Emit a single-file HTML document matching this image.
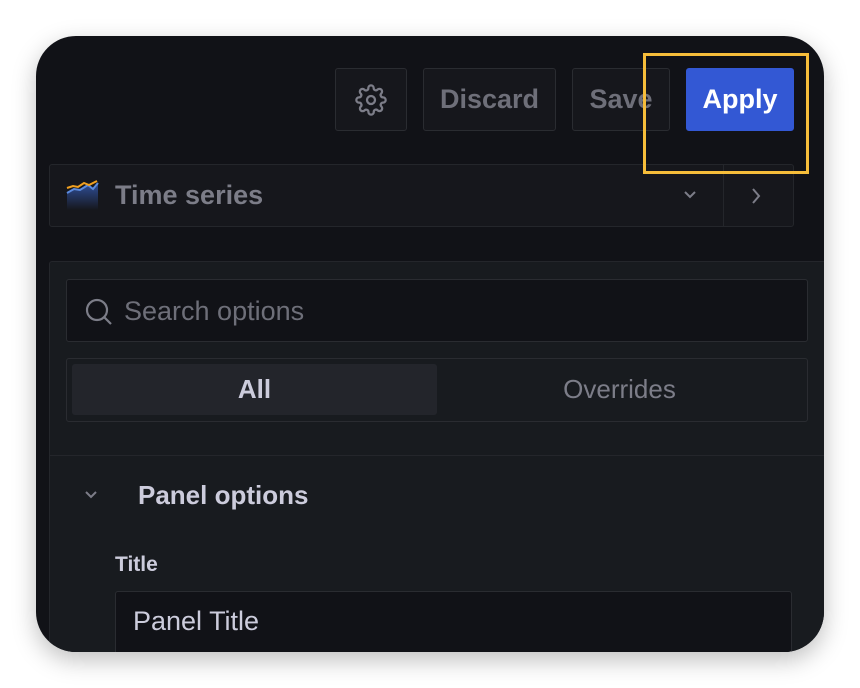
<!DOCTYPE html>
<html><head><style>
*{box-sizing:border-box;margin:0;padding:0}
body{width:860px;height:688px;background:#fff;font-family:"Liberation Sans",sans-serif;position:relative;overflow:hidden}
.card{position:absolute;left:36px;top:36px;width:788px;height:616px;background:#111217;border-radius:40px;overflow:hidden;box-shadow:0 8px 24px rgba(0,0,0,.25)}
.a{position:absolute}
.btn{position:absolute;top:32px;height:63px;background:#16171c;border:1px solid #2a2c31;border-radius:3px;color:#6e6f79;font-weight:bold;font-size:27px;display:flex;align-items:center;justify-content:center}
</style></head><body>
<div class="card">
 <div class="btn" style="left:299px;width:72px"><svg width="32" height="32" viewBox="0 0 24 24" fill="none" stroke="#7c7d88" stroke-width="1.7"><circle cx="12" cy="12" r="3"/><path d="M19.4 15a1.65 1.65 0 0 0 .33 1.82l.06.06a2 2 0 1 1-2.83 2.83l-.06-.06a1.65 1.65 0 0 0-1.82-.33 1.65 1.65 0 0 0-1 1.51V21a2 2 0 1 1-4 0v-.09A1.65 1.65 0 0 0 9 19.4a1.65 1.65 0 0 0-1.82.33l-.06.06a2 2 0 1 1-2.83-2.83l.06-.06A1.65 1.65 0 0 0 4.68 15a1.65 1.65 0 0 0-1.51-1H3a2 2 0 1 1 0-4h.09A1.65 1.65 0 0 0 4.6 9a1.65 1.65 0 0 0-.33-1.82l-.06-.06a2 2 0 1 1 2.83-2.83l.06.06A1.65 1.65 0 0 0 9 4.68 1.65 1.65 0 0 0 10 3.17V3a2 2 0 1 1 4 0v.09a1.65 1.65 0 0 0 1 1.51 1.65 1.65 0 0 0 1.82-.33l.06-.06a2 2 0 1 1 2.83 2.83l-.06.06A1.65 1.65 0 0 0 19.4 9a1.65 1.65 0 0 0 1.51 1H21a2 2 0 1 1 0 4h-.09a1.65 1.65 0 0 0-1.51 1z"/></svg></div>
 <div class="btn" style="left:387px;width:133px">Discard</div>
 <div class="btn" style="left:536px;width:98px">Save</div>
 <div class="btn" style="left:650px;width:108px;background:#3358d4;border-color:#3358d4;color:#fff">Apply</div>
 <div class="a" style="left:13px;top:128px;width:745px;height:63px;background:#16171c;border:1px solid #24262b;border-radius:3px">
  <svg class="a" style="left:16px;top:15px" width="34" height="30" viewBox="0 0 34 30"><defs><linearGradient id="g" x1="0" y1="0" x2="0" y2="1"><stop offset="0" stop-color="#2f4f9a"/><stop offset="1" stop-color="#16171c"/></linearGradient></defs><path d="M1 13 L8 9 L14 10 L22 5 L27 9 L32 3 L32 30 L1 30Z" fill="url(#g)"/><path d="M1 13 L8 9 L14 10 L22 5 L27 9 L32 3" stroke="#5b8bdf" stroke-width="2" fill="none"/><path d="M1 5 L7 3 L12 4 L18 0 L23 2 L31 -2" transform="translate(0,3)" stroke="#f0a020" stroke-width="2" fill="none"/></svg>
  <div class="a" style="left:65px;top:15px;font-size:27px;font-weight:bold;color:#7c7d88">Time series</div>
  <svg class="a" style="left:632px;top:24px" width="16" height="12" viewBox="0 0 16 12"><path d="M3 3 L8 8 L13 3" stroke="#7c7d88" stroke-width="2" fill="none"/></svg>
  <div class="a" style="left:673px;top:0;width:1px;height:61px;background:#24262b"></div>
  <svg class="a" style="left:700px;top:22px" width="12" height="18" viewBox="0 0 12 18"><path d="M3 2 L9 9 L3 16" stroke="#7c7d88" stroke-width="2" fill="none"/></svg>
 </div>
 <div class="a" style="left:13px;top:225px;width:790px;height:400px;background:#181b1f;border:1px solid #24262b;border-radius:3px">
  <div class="a" style="left:16px;top:17px;width:742px;height:63px;background:#111217;border:1px solid #2a2c31;border-radius:3px">
   <svg class="a" style="left:17px;top:17px" width="30" height="30" viewBox="0 0 30 30"><circle cx="13" cy="13" r="10" stroke="#7c7d88" stroke-width="2.2" fill="none"/><path d="M20.5 20.5 L27 27" stroke="#7c7d88" stroke-width="2.2"/></svg>
   <div class="a" style="left:57px;top:16px;font-size:27px;color:#6e6f79">Search options</div>
  </div>
  <div class="a" style="left:16px;top:96px;width:742px;height:64px;background:#181b1f;border:1px solid #2a2c31;border-radius:3px">
   <div class="a" style="left:5px;top:5px;width:365px;height:51px;background:#23252b;border-radius:3px;color:#ccccdc;font-weight:bold;font-size:26px;display:flex;align-items:center;justify-content:center">All</div>
   <div class="a" style="left:370px;top:5px;width:365px;height:51px;color:#7c7d88;font-size:26px;display:flex;align-items:center;justify-content:center">Overrides</div>
  </div>
  <div class="a" style="left:0;top:193px;width:790px;height:1px;background:#24262b"></div>
  <svg class="a" style="left:33px;top:227px" width="16" height="12" viewBox="0 0 16 12"><path d="M3 3 L8 8 L13 3" stroke="#7c7d88" stroke-width="2" fill="none"/></svg>
  <div class="a" style="left:88px;top:218px;font-size:26px;font-weight:bold;color:#ccccdc">Panel options</div>
  <div class="a" style="left:65px;top:291px;font-size:21px;font-weight:bold;color:#ccccdc">Title</div>
  <div class="a" style="left:65px;top:329px;width:677px;height:80px;background:#111217;border:1px solid #2a2c31;border-radius:3px">
   <div class="a" style="left:17px;top:14px;font-size:27px;color:#ccccdc">Panel Title</div>
  </div>
 </div>
</div>
<div class="a" style="left:643px;top:53px;width:166px;height:121px;border:3px solid #f6bd3a"></div>
</body></html>
